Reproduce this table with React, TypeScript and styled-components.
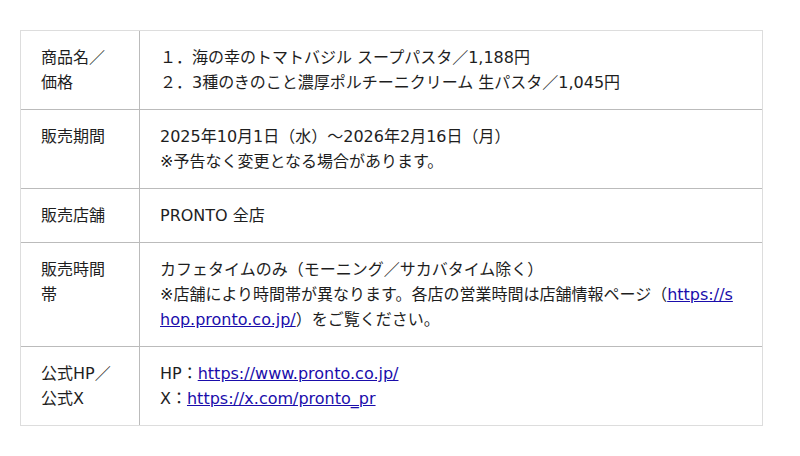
import React from "react";
import styled, { createGlobalStyle } from "styled-components";

const GlobalStyle = createGlobalStyle`
  html, body {
    margin: 0;
    padding: 0;
    background: #ffffff;
  }
  body {
    font-family: "DejaVu Sans", "Noto Sans CJK JP", sans-serif;
    color: #1e1e1e;
  }
`;

const Page = styled.div`
  width: 800px;
  height: 456px;
  padding: 30px 38px 0 20px;
  box-sizing: border-box;
`;

const Table = styled.div`
  display: grid;
  grid-template-columns: 118px 1fr;
  border: 1px solid #dddddd;
  width: 743px;
  box-sizing: border-box;
`;

const Cell = styled.div<{ $label?: boolean; $last?: boolean }>`
  padding: 14px 20px;
  font-size: 16px;
  line-height: 25px;
  white-space: nowrap;
  border-bottom: ${(p) => (p.$last ? "none" : "1px solid #bbbbbb")};
  border-left: ${(p) => (p.$label ? "none" : "1px solid #bbbbbb")};
`;

const Link = styled.a`
  color: #1a0dab;
  text-decoration: underline;
`;

const rows: { label: React.ReactNode; value: React.ReactNode }[] = [
  {
    label: (
      <>
        商品名／
        <br />
        価格
      </>
    ),
    value: (
      <>
        １．海の幸のトマトバジル スープパスタ／1,188円
        <br />
        ２．3種のきのこと濃厚ポルチーニクリーム 生パスタ／1,045円
      </>
    ),
  },
  {
    label: "販売期間",
    value: (
      <>
        2025年10月1日（水）～2026年2月16日（月）
        <br />
        ※予告なく変更となる場合があります。
      </>
    ),
  },
  { label: "販売店舗", value: "PRONTO 全店" },
  {
    label: (
      <>
        販売時間
        <br />
        帯
      </>
    ),
    value: (
      <>
        カフェタイムのみ（モーニング／サカバタイム除く）
        <br />
        ※店舗により時間帯が異なります。各店の営業時間は店舗情報ページ（
        <Link href="#">
          https://s
          <br />
          hop.pronto.co.jp/
        </Link>
        ）をご覧ください。
      </>
    ),
  },
  {
    label: (
      <>
        公式HP／
        <br />
        公式X
      </>
    ),
    value: (
      <>
        HP：<Link href="#">https://www.pronto.co.jp/</Link>
        <br />
        X：<Link href="#">https://x.com/pronto_pr</Link>
      </>
    ),
  },
];

export default function App() {
  return (
    <>
      <GlobalStyle />
      <Page>
        <Table>
          {rows.map((r, i) => (
            <React.Fragment key={i}>
              <Cell $label $last={i === rows.length - 1}>
                {r.label}
              </Cell>
              <Cell $last={i === rows.length - 1}>{r.value}</Cell>
            </React.Fragment>
          ))}
        </Table>
      </Page>
    </>
  );
}
